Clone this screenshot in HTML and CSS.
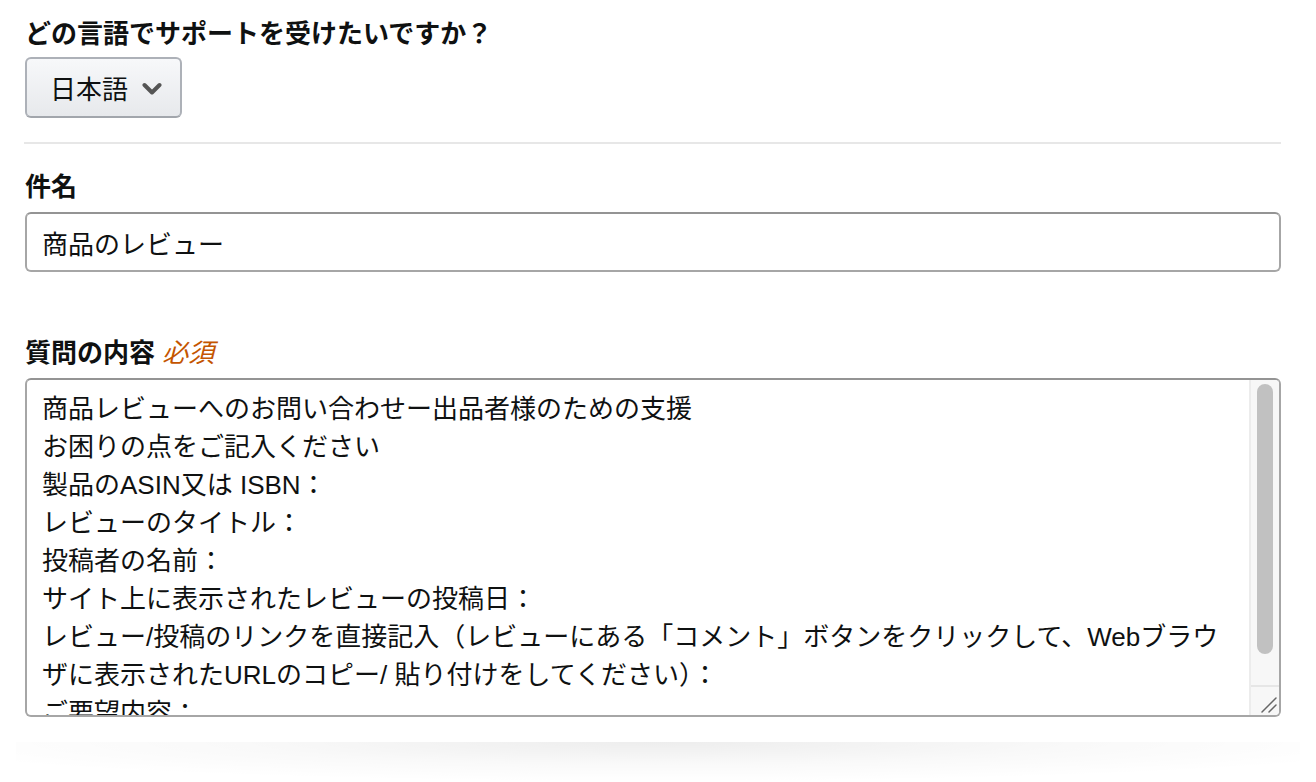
FILE: index.html
```html
<!DOCTYPE html>
<html lang="ja">
<head>
    <meta charset="UTF-8">
    <meta name="viewport" content="width=device-width, initial-scale=1.0">
    <title>お問い合わせ</title>
    <link rel="stylesheet" href="styles.css">
</head>
<body>
    <div class="contact-card">
        <div class="form-section">
            <label class="field-label" for="language">どの言語でサポートを受けたいですか？</label>
            <button class="lang-select" id="language" type="button">
                <span>日本語</span>
                <svg class="chevron" width="20" height="14" viewBox="0 0 20 14">
                    <path d="M2.5 3 L10 10.5 L17.5 3" fill="none" stroke="#555" stroke-width="4" stroke-linecap="round" stroke-linejoin="round"/>
                </svg>
            </button>
        </div>

        <hr class="divider">

        <div class="form-section">
            <label class="field-label" for="subject">件名</label>
            <input class="text-input" type="text" id="subject" value="商品のレビュー">
        </div>

        <div class="form-section question">
            <label class="field-label" for="question">質問の内容 <em class="required">必須</em></label>
            <div class="textarea-wrap">
                <textarea class="text-area" id="question">商品レビューへのお問い合わせー出品者様のための支援
お困りの点をご記入ください
製品のASIN又は ISBN：
レビューのタイトル：
投稿者の名前：
サイト上に表示されたレビューの投稿日：
レビュー/投稿のリンクを直接記入（レビューにある「コメント」ボタンをクリックして、Webブラウザに表示されたURLのコピー/ 貼り付けをしてください）：
ご要望内容：
</textarea>
                <!-- スクロールバー（見た目のみ） -->
                <div class="scroll-bar" aria-hidden="true">
                    <div class="scroll-track">
                        <div class="scroll-thumb"></div>
                    </div>
                    <div class="scroll-corner">
                        <svg width="28" height="28" viewBox="0 0 28 28">
                            <path d="M11 25 L25 11 M18 25 L25 18" stroke="#666" stroke-width="1.5" stroke-linecap="round"/>
                        </svg>
                    </div>
                </div>
            </div>
        </div>
    </div>
    <div class="card-shadow"></div>
</body>
</html>
```

FILE: styles.css
```css
body {
    margin: 0;
    padding: 0;
    background-color: #ffffff;
    font-family: "Liberation Sans", "Noto Sans CJK JP", sans-serif;
    color: #0f1111;
    font-size: 26px;
    line-height: 38px;
}
.contact-card {
    background-color: #ffffff;
    padding: 15px 35px 25px 25px;
}
.card-shadow {
    height: 40px;
    margin: 0 16px;
    background: radial-gradient(ellipse 60% 100% at 50% 0%, rgba(0,0,0,0.07), rgba(0,0,0,0.025) 55%, rgba(0,0,0,0) 100%);
}
.field-label {
    display: block;
    font-weight: bold;
    font-size: 26px;
}
.lang-select {
    display: flex;
    align-items: center;
    gap: 14px;
    margin-top: 4px;
    height: 61px;
    padding: 0 18px 0 23px;
    border: 2px solid #adb1b8;
    border-bottom-color: #a2a6ac;
    border-radius: 6px;
    background: linear-gradient(to bottom, #f7f8fa, #e7e9ec);
    font-family: inherit;
    font-size: 26px;
    color: #0f1111;
    cursor: pointer;
}
.chevron {
    display: block;
    margin-top: 2px;
}
.divider {
    border: none;
    border-top: 2px solid #e7e7e7;
    margin: 24px 0 24px -1px;
}
.text-input {
    display: block;
    width: 100%;
    box-sizing: border-box;
    height: 60px;
    margin-top: 6px;
    padding: 0 15px;
    border: 2px solid #a6a6a6;
    border-top-color: #949494;
    border-radius: 6px;
    font-family: inherit;
    font-size: 26px;
    color: #0f1111;
}
.question {
    margin-top: 62px;
}
.required {
    color: #c45500;
    font-weight: normal;
    font-style: italic;
    font-size: 26px;
}
.textarea-wrap {
    position: relative;
    margin-top: 6px;
}
.text-area {
    display: block;
    width: 100%;
    box-sizing: border-box;
    height: 339px;
    padding: 10px 45px 9px 15px;
    border: 2px solid #a6a6a6;
    border-top-color: #949494;
    border-radius: 6px;
    font-family: inherit;
    font-size: 26px;
    line-height: 38px;
    color: #0f1111;
    resize: none;
    overflow: hidden;
}
.scroll-bar {
    position: absolute;
    top: 2px;
    right: 2px;
    bottom: 2px;
    width: 28px;
    display: flex;
    flex-direction: column;
    background: #f7f7f7;
    border-left: 2px solid #ececec;
    border-radius: 0 4px 4px 0;
}
.scroll-track {
    flex: 1;
    padding: 4px 6px 0 6px;
}
.scroll-thumb {
    height: 270px;
    background: #c1c1c1;
    border-radius: 8px;
}
.scroll-corner {
    height: 28px;
    border-top: 2px solid #e6e6e6;
}
.scroll-corner svg {
    display: block;
}
```
